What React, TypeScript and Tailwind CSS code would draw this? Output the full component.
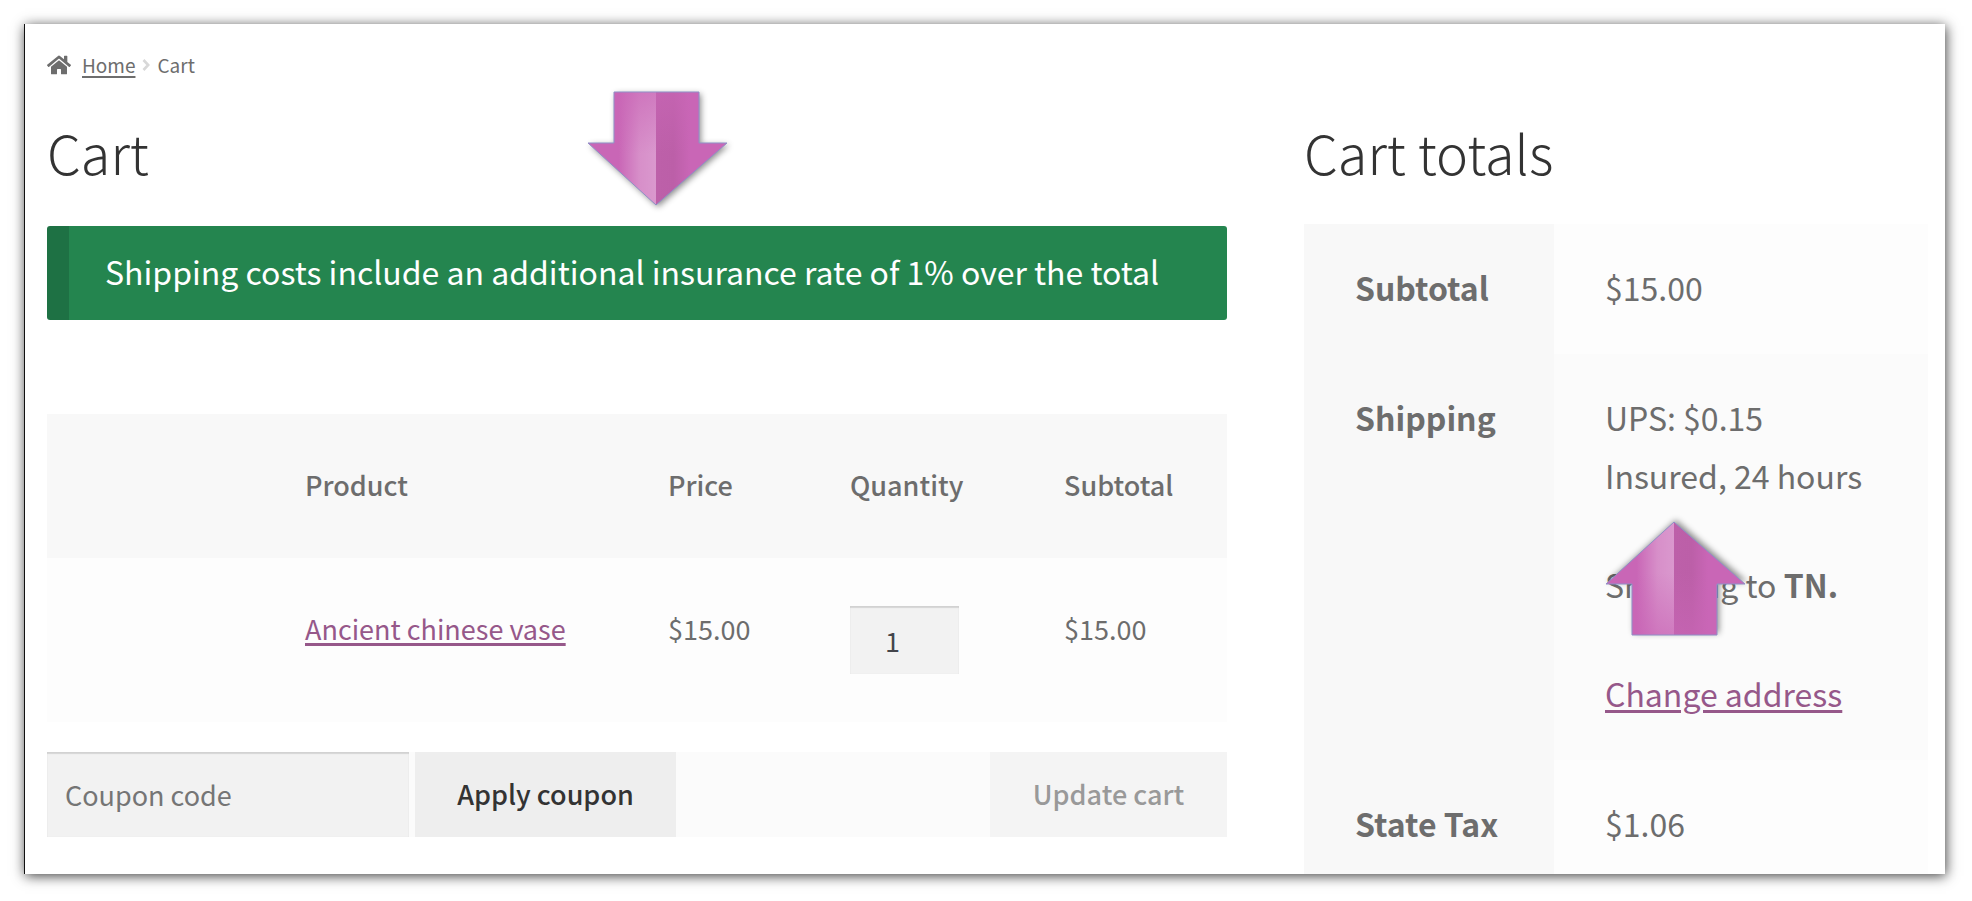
import { useId } from "react";
import { FaHome } from "react-icons/fa";

function PointerArrow({ className }: { className: string }) {
  const id = useId();
  return (
    <svg
      aria-hidden="true"
      viewBox="0 0 139 113"
      className={`pointer-events-none absolute h-[113px] w-[139px] overflow-visible ${className}`}
    >
      <defs>
        <linearGradient id={`${id}l`} x1="0" x2="1">
          <stop offset="0.45" stopColor="#c966b6" />
          <stop offset="0.76" stopColor="#d78fc9" />
          <stop offset="1" stopColor="#da98ce" />
        </linearGradient>
        <linearGradient id={`${id}r`} x1="0" x2="1">
          <stop offset="0" stopColor="#bd60a9" />
          <stop offset="0.25" stopColor="#bc5fa8" />
          <stop offset="0.48" stopColor="#c966b6" />
        </linearGradient>
        <linearGradient id={`${id}t`} x1="0" x2="0" y1="0" y2="1">
          <stop offset="0" stopColor="#c966b6" stopOpacity="0.6" />
          <stop offset="0.55" stopColor="#c966b6" stopOpacity="0" />
        </linearGradient>
      </defs>
      <g style={{ filter: "drop-shadow(2px 2px 3px rgba(0,0,0,0.45))" }}>
        <path d="M0 51H26V0H68V113Z" fill={`url(#${id}l)`} />
        <path d="M139 51H111V0H68V113Z" fill={`url(#${id}r)`} />
      </g>
      <path d="M0 51H26V0H111V51H139L68 113Z" fill={`url(#${id}t)`} stroke="#8f8fc8" strokeWidth="1" />
    </svg>
  );
}

const link = "text-[#96588a] underline decoration-[3px] underline-offset-[3px]";
const field =
  "bg-[#f2f2f2] text-[27px] leading-[46px] text-[#43454b] shadow-[inset_0_2px_1px_rgba(0,0,0,0.12),inset_0_0_1px_rgba(0,0,0,0.1)] outline-none placeholder:text-[#757575]";
const heading = "mt-[34px] text-[54px] leading-[74px] font-light text-[#333333]";
const totalsHead = "bg-[#f8f8f8] px-[51px] pt-[34px] pb-[38px] text-left align-top font-bold";
const totalsCell = "px-[51px] pt-[34px] pb-[38px] align-top";
const columnHead = "pt-12 pb-[50px] font-medium";

export default function App() {
  return (
    <div className="flex h-screen flex-col bg-white px-6 pt-6 pr-[27px] pb-[27px] font-['Source_Sans_Pro','Noto_Sans_CJK_SC',sans-serif] text-[#6d6d6d]">
      <main className="min-h-0 flex-1 overflow-hidden border-l border-[#111111] bg-white pt-[25px] pr-[17px] pl-[22px] shadow-[1px_2px_12px_rgba(0,0,0,0.75)]">
        <nav aria-label="Breadcrumb" className="flex items-center text-[19px] leading-8">
          <FaHome aria-hidden="true" className="size-6" />
          <a href="#home" className="ml-[11px] underline decoration-2 underline-offset-[3px]">
            Home
          </a>
          <svg aria-hidden="true" viewBox="0 0 8 12" className="mx-[7px] h-3 w-2">
            <path d="M1.5 1L6.2 6L1.5 11" fill="none" stroke="#d8d8d8" strokeWidth="2.6" />
          </svg>
          <span>Cart</span>
        </nav>

        <div className="grid grid-cols-[1180fr_624fr] gap-[77px]">
          <section className="relative min-w-0">
            <h1 className={heading}>Cart</h1>
            <PointerArrow className="top-[11px] left-[541px]" />

            <div
              role="status"
              className="mt-[37px] rounded-[3px] border-l-[22px] border-[#1e7144] bg-[#24854f] px-[36px] pt-4 pb-5 text-[32px] leading-[58px] whitespace-nowrap text-white"
            >
              Shipping costs include an additional insurance rate of 1% over the total
            </div>

            <form onSubmit={(event) => event.preventDefault()} className="mt-[94px]">
              <table className="w-full table-fixed text-left text-[27px] leading-[46px]">
                <colgroup>
                  <col className="w-[258px]" />
                  <col />
                  <col className="w-[182px]" />
                  <col className="w-[214px]" />
                  <col className="w-[163px]" />
                </colgroup>
                <thead>
                  <tr className="bg-[#f8f8f8]">
                    <td />
                    <th scope="col" className={columnHead}>Product</th>
                    <th scope="col" className={columnHead}>Price</th>
                    <th scope="col" className={columnHead}>Quantity</th>
                    <th scope="col" className={columnHead}>Subtotal</th>
                  </tr>
                </thead>
                <tbody>
                  <tr className="bg-[#fdfdfd] align-top">
                    <td />
                    <td className="pt-12">
                      <a href="#product" className={link}>Ancient chinese vase</a>
                    </td>
                    <td className="pt-12">$15.00</td>
                    <td className="py-12">
                      <input
                        type="text"
                        inputMode="numeric"
                        aria-label="Quantity"
                        defaultValue="1"
                        className={`block h-[68px] w-[109px] pl-[35px] ${field}`}
                      />
                    </td>
                    <td className="pt-12">$15.00</td>
                  </tr>
                </tbody>
              </table>

              <div className="mt-[30px] flex h-[85px] bg-[#fbfbfb] text-[27px]">
                <input
                  type="text"
                  aria-label="Coupon code"
                  placeholder="Coupon code"
                  className={`w-[362px] pl-[18px] ${field}`}
                />
                <button type="submit" className="ml-1.5 w-[261px] bg-[#eeeeee] font-medium text-[#333333]">
                  Apply coupon
                </button>
                <button type="button" disabled className="ml-auto w-[237px] bg-[#f4f4f4] font-medium text-[#999999]">
                  Update cart
                </button>
              </div>
            </form>
          </section>

          <section className="min-w-0">
            <h2 className={heading}>Cart totals</h2>
            <table className="mt-[35px] w-full table-fixed text-left text-[32px] leading-[58px]">
              <colgroup>
                <col className="w-[250px]" />
                <col />
              </colgroup>
              <tbody>
                <tr className="bg-[#fdfdfd]">
                  <th scope="row" className={totalsHead}>Subtotal</th>
                  <td className={totalsCell}>$15.00</td>
                </tr>
                <tr className="bg-[#fbfbfb]">
                  <th scope="row" className={totalsHead}>Shipping</th>
                  <td className={`relative ${totalsCell}`}>
                    <p className="whitespace-nowrap">
                      UPS: $0.15
                      <br />
                      Insured, 24 hours
                    </p>
                    <p className="my-[51px]">
                      Shipping to <strong>TN.</strong>
                    </p>
                    <a href="#address" className={`whitespace-nowrap ${link}`}>Change address</a>
                    <PointerArrow className="top-[168px] left-[52px] -scale-y-100" />
                  </td>
                </tr>
                <tr className="bg-[#fdfdfd]">
                  <th scope="row" className={`whitespace-nowrap ${totalsHead}`}>State Tax</th>
                  <td className={totalsCell}>$1.06</td>
                </tr>
              </tbody>
            </table>
          </section>
        </div>
      </main>
    </div>
  );
}
